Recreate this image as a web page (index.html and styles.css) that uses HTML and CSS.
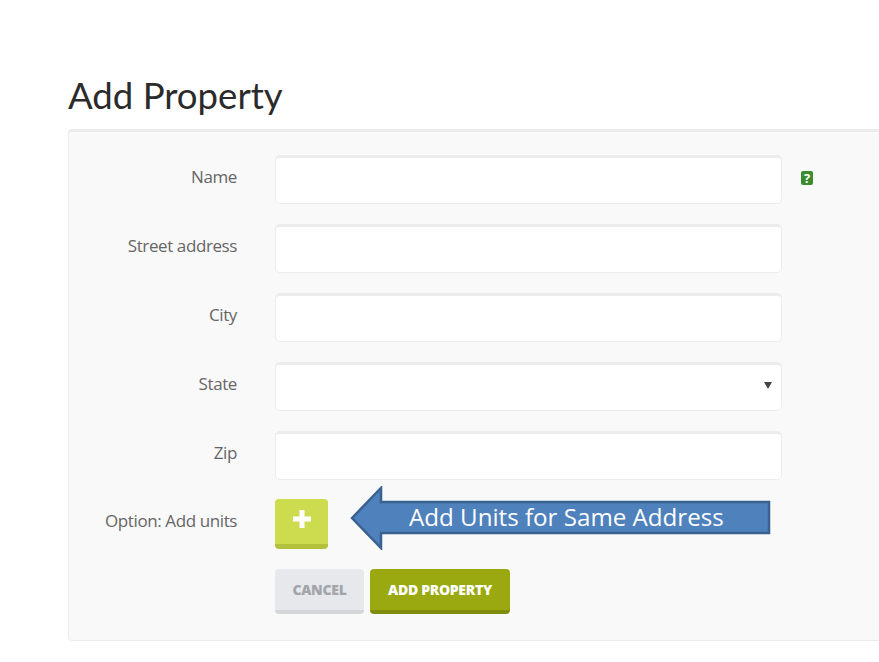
FILE: index.html
```html
<!DOCTYPE html>
<html lang="en">
<head>
  <meta charset="UTF-8">
  <title>Add Property</title>
  <link rel="stylesheet" href="styles.css">
</head>
<body>

  <h1>Add Property</h1>

  <form class="panel">
    <div class="row">
      <label>Name</label>
      <input type="text">
      <span class="help">?</span>
    </div>
    <div class="row">
      <label>Street address</label>
      <input type="text">
    </div>
    <div class="row">
      <label>City</label>
      <input type="text">
    </div>
    <div class="row">
      <label>State</label>
      <div class="select-wrap">
        <select></select>
        <span class="caret"></span>
      </div>
    </div>
    <div class="row">
      <label>Zip</label>
      <input type="text">
    </div>

    <!-- Add units, with the annotation arrow over it -->
    <div class="row units">
      <label>Option: Add units</label>
      <button type="button" class="btn-plus">
        <svg width="20" height="20" viewBox="0 0 20 20"><path d="M7.500 1h5v6.500H19v5h-6.500V19h-5v-6.500H1v-5h6.500z" fill="#fff"/></svg>
      </button>
      <div class="callout">
        <svg width="422" height="64" viewBox="0 0 422 64">
          <polygon points="2,32 31,2 31,16 419,16 419,47 31,47 31,62" fill="#4f81bd" stroke="#3a6291" stroke-width="2.500"/>
        </svg>
        <span class="callout-text">Add Units for Same Address</span>
      </div>
    </div>

    <div class="actions">
      <button type="button" class="btn btn-cancel">CANCEL</button>
      <button type="submit" class="btn btn-add">ADD PROPERTY</button>
    </div>
  </form>

</body>
</html>
```

FILE: styles.css
```css
body {
  font-family: "Open Sans", Arial, sans-serif;
  background: #fff;
  margin: 0;
  padding: 0 0 22px 68px;
  overflow-x: hidden;
}

h1 {
  font-family: Lato, Arial, sans-serif;
  font-size: 36.6px;
  font-weight: 400;
  line-height: 46px;
  color: #2b2b2b;
  margin: 0;
  padding: 72px 0 11px;
}

.panel {
  background: #f9f9f9;
  border: 1px solid #ececec;
  border-top-width: 3px;
  border-right: 0;
  border-radius: 4px 0 0 4px;
  padding: 23px 0 25px;
  height: 512px;
  box-sizing: border-box;
}

.row {
  display: flex;
  align-items: center;
  margin-bottom: 20px;
  position: relative;
}

label {
  width: 168px;
  margin-right: 38px;
  padding-bottom: 7px;
  text-align: right;
  font-size: 17px;
  letter-spacing: -0.4px;
  color: #666;
}

input, select {
  display: block;
  width: 507px;
  height: 49px;
  box-sizing: border-box;
  background: #fff;
  border: 1px solid #ececec;
  border-top-width: 3px;
  border-radius: 5px;
  appearance: none;
}

.select-wrap {
  position: relative;
}

.caret {
  position: absolute;
  right: 10px;
  top: 20px;
  border-left: 4px solid transparent;
  border-right: 4px solid transparent;
  border-top: 7px solid #444;
}

.help {
  width: 12px;
  height: 14px;
  margin: -3px 0 0 19px;
  background: #3d8b2f;
  border-radius: 2px;
  color: #fff;
  font-size: 13px;
  font-weight: 700;
  line-height: 14px;
  text-align: center;
}

.units {
  height: 50px;
  margin-top: -1px;
}

.btn-plus {
  width: 53px;
  height: 50px;
  padding: 0 0 5px;
  background: #cddc4e;
  border: 0;
  border-bottom: 5px solid #b3c13d;
  border-radius: 4px;
  display: flex;
  align-items: center;
  justify-content: center;
}

.callout {
  position: absolute;
  left: 281px;
  top: -13px;
  width: 422px;
  height: 64px;
}

.callout svg {
  display: block;
}

.callout-text {
  position: absolute;
  left: 59px;
  top: 13px;
  font-size: 24.15px;
  line-height: 36px;
  color: #fff;
  white-space: nowrap;
}

.actions {
  display: flex;
  gap: 6px;
  margin-left: 206px;
}

.btn {
  height: 45px;
  padding: 0;
  border: 0;
  border-bottom: 4px solid;
  border-radius: 4px;
  font-family: "Open Sans", Arial, sans-serif;
  font-size: 14px;
  font-weight: 800;
  letter-spacing: -0.3px;
}

.btn-cancel {
  width: 89px;
  background: #e6e8ec;
  border-color: #d4d6da;
  color: #a2a5a9;
}

.btn-add {
  width: 140px;
  background: #9aa90f;
  border-color: #7f8c0c;
  color: #fff;
}
```
